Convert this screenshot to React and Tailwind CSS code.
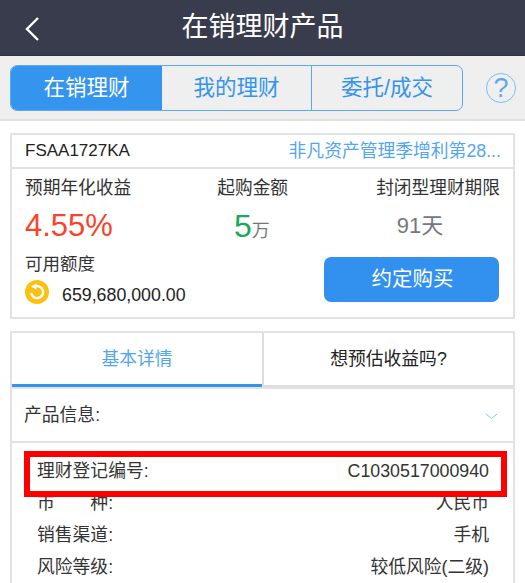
const CJK = "font-['Liberation_Sans','Noto_Sans_CJK_SC',sans-serif]";

const rows = [
  ["理财登记编号:", "C1030517000940"],
  ["市　　种:", "人民币"],
  ["销售渠道:", "手机"],
  ["风险等级:", "较低风险(二级)"],
];

const App = () => {
  return (
    <div className={`${CJK} w-[525px] h-[583px] overflow-hidden bg-white`}>
      {/* Title bar */}
      <div className="relative h-[56px] bg-[#393c4c] border-b border-[#2f3240] flex items-center justify-center">
        <svg
          className="absolute left-[24px] top-[16px] w-[16px] h-[26px]"
          fill="none"
          stroke="#ffffff"
          viewBox="0 0 16 26"
        >
          <path strokeWidth="2.4" d="M14 2L3 13l11 11" />
        </svg>
        <h1 className="text-[27px] leading-none text-white">在销理财产品</h1>
      </div>

      {/* Segmented tabs */}
      <div className="h-[65px] bg-[#efefef] border-b-2 border-[#e0e0e0] flex items-center pl-[10px] pr-[9px] pt-[1px]">
        <div className="w-[453px] h-[46px] flex rounded-[7px] border border-[#5ca7ef] overflow-hidden text-[21.5px] text-[#3494ee]">
          <div className="w-[151px] bg-[#3494ee] text-white flex items-center justify-center">在销理财</div>
          <div className="w-[150px] border-r border-[#5ca7ef] flex items-center justify-center">我的理财</div>
          <div className="flex-1 flex items-center justify-center">委托/成交</div>
        </div>
        <div className="ml-auto w-[30px] h-[30px] rounded-full border-[1.5px] border-[#7dbcf3] flex items-center justify-center text-[27px] leading-none text-[#5ca7ef]">
          ?
        </div>
      </div>

      {/* Product card */}
      <div className="mx-[10px] mt-[12px] h-[186px] border-2 border-[#e2e2e2] flex flex-col">
        <div className="h-[34px] shrink-0 border-b-2 border-[#e2e2e2] flex items-center justify-between pl-[13px] pr-[12px]">
          <span className="text-[17px] text-[#222222]">FSAA1727KA</span>
          <span className="text-[17.8px] text-[#52a5f0]">非凡资产管理季增利第28...</span>
        </div>
        <div className="flex-1 pl-[13px] pr-[13px] pt-[7px]">
          <div className="flex justify-between text-[17.7px] leading-[24px] text-[#333333]">
            <span>预期年化收益</span>
            <span className="mr-[2px]">起购金额</span>
            <span>封闭型理财期限</span>
          </div>
          <div className="flex items-end mt-[7px] h-[38px]">
            <span className="w-[209px] text-[31px] leading-[38px] text-[#f9432b]">4.55%</span>
            <span className="text-[32px] leading-[38px] text-[#1aa85c]">5</span>
            <span className="text-[18px] leading-[28px] text-[#777780]">万</span>
            <span className="ml-[127px] mb-[3px] text-[22px] leading-[32px] text-[#777780]">91天</span>
          </div>
          <div className="flex justify-between mt-[7px]">
            <div>
              <div className="text-[17.5px] leading-[24px] text-[#333333]">可用额度</div>
              <div className="flex items-start mt-[4px]">
                <svg className="w-[24px] h-[24px]" viewBox="0 0 24 24">
                  <circle cx="12" cy="12" r="12" fill="#fcc10e" />
                  <path
                    fill="none"
                    stroke="#ffffff"
                    strokeWidth="2.4"
                    d="M11 6.2A6 6 0 1 1 6.2 13"
                  />
                  <path fill="#ffffff" d="M6 6.5l5.5-3.2v6.4z" />
                </svg>
                <span className="ml-[13px] mt-[2px] text-[17.8px] leading-[26px] text-[#222222]">659,680,000.00</span>
              </div>
            </div>
            <div className="w-[175px] h-[45px] mt-[5px] mr-[1px] pl-[2px] rounded-[7px] bg-[#3291ee] text-white text-[20.5px] flex items-center justify-center">
              约定购买
            </div>
          </div>
        </div>
      </div>

      {/* Detail card */}
      <div className="relative mx-[10px] mt-[12px] border-x-2 border-t-2 border-[#e2e2e2] h-[260px]">
        <div className="h-[54px] flex text-[17.8px]">
          <div className="w-[250px] pt-[1px] border-b-[3px] border-[#3494ee] text-[#52a5f0] flex items-center justify-center">基本详情</div>
          <div className="flex-1 border-l-2 border-b-2 border-[#dddddd] text-[#222222] flex items-center justify-center">想预估收益吗?</div>
        </div>
        <div className="h-[2px] bg-[#e2e2e2]" />
        <div className="h-[54px] border-b-2 border-[#e2e2e2] flex items-center justify-between pl-[12px] pr-[15px] text-[17.8px] text-[#333333]">
          <span>产品信息:</span>
          <svg className="w-[13px] h-[7px] mt-[2px]" fill="none" stroke="#8cc2f3" viewBox="0 0 13 7">
            <path strokeWidth="1" d="M1 1l5.5 4.5L12 1" />
          </svg>
        </div>
        <div className="pt-[12px] pl-[25px] pr-[24px] text-[17.8px] text-[#333333]">
          {rows.map(([label, value]) => (
            <div key={label} className="h-[32px] flex items-center justify-between">
              <span>{label}</span>
              <span>{value}</span>
            </div>
          ))}
        </div>
        {/* Red annotation box */}
        <div className="absolute left-[12px] top-[118px] w-[483px] h-[46px] border-[6px] border-[#fe0000]" />
      </div>
    </div>
  );
};

export default App;
